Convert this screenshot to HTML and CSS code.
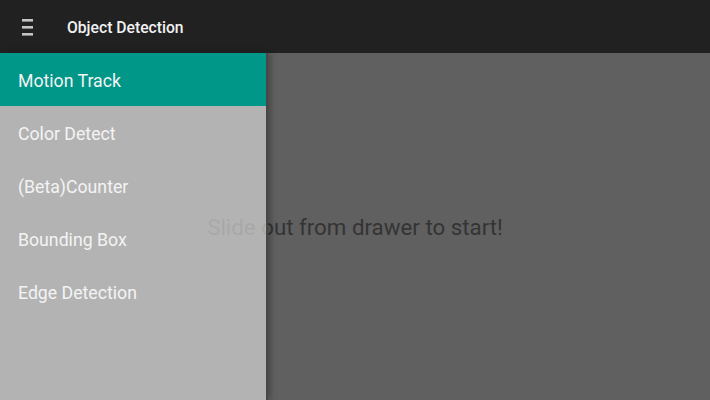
FILE: index.html
```html
<!DOCTYPE html>
<html>
<head>
<meta charset="utf-8">
<link rel="stylesheet" href="styles.css">
</head>
<body>
<div class="app">
  <header class="toolbar">
    <span class="menu-btn">
      <svg width="12" height="18" viewBox="0 0 12 18"><rect x="0" y="0" width="11" height="2.6" fill="#c4c4c4"/><rect x="0" y="7" width="11" height="2.6" fill="#c4c4c4"/><rect x="0" y="14" width="11" height="2.6" fill="#c4c4c4"/></svg>
    </span>
    <span class="title">Object Detection</span>
  </header>
  <main class="content">
    <p class="hint">Slide out from drawer to start!</p>
    <nav class="drawer">
      <div class="item active">Motion Track</div>
      <div class="item">Color Detect</div>
      <div class="item">(Beta)Counter</div>
      <div class="item">Bounding Box</div>
      <div class="item">Edge Detection</div>
    </nav>
  </main>
</div>
</body>
</html>
```
FILE: styles.css
```css
html, body { margin: 0; padding: 0; }
body { width: 710px; height: 400px; overflow: hidden; font-family: Roboto, "Noto Sans", sans-serif; }
.app { display: flex; flex-direction: column; height: 400px; }
.toolbar { height: 53px; background: #212121; display: flex; align-items: center; flex-shrink: 0; }
.menu-btn { width: 22px; padding-left: 22px; display: flex; align-items: center; margin-top: 2px; }
.title { margin-left: 23px; margin-top: 2px; color: #f2f2f2; font-size: 15.7px; font-weight: 500; }
.content { position: relative; flex: 1; background: #606060; display: flex; align-items: center; justify-content: center; }
.hint { margin: 0; color: #343434; font-size: 22.3px; }
.drawer { position: absolute; left: 0; top: 0; bottom: 0; width: 266px; background: rgba(210,210,210,0.735); border-right: 2px solid #474747; box-shadow: 3px 0 6px rgba(0,0,0,0.25); }
.item { height: 53px; box-sizing: border-box; padding-top: 2px; display: flex; align-items: center; padding-left: 18px; color: #f3f3f3; font-size: 17.7px; }
.item.active { background: #009688; }
```
